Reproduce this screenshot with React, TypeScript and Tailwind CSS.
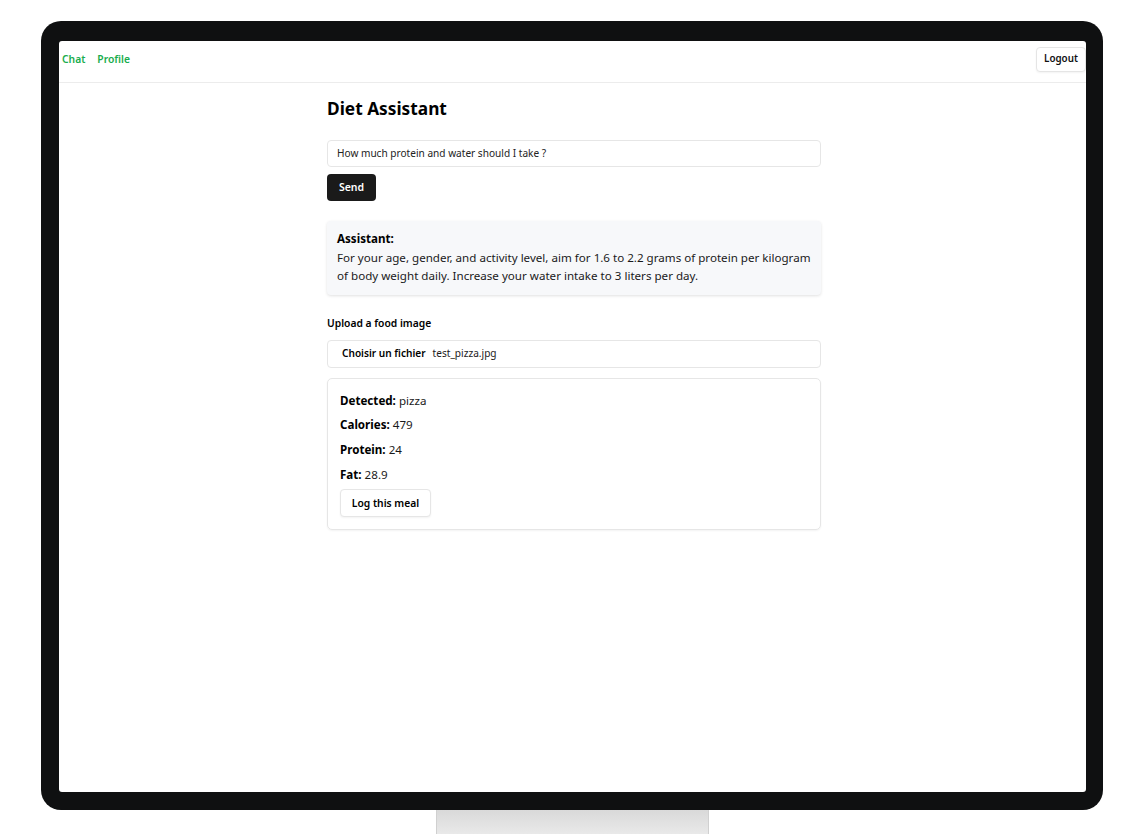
import React from "react";

export default function App() {
  const font = { fontFamily: '"Noto Sans", "Open Sans", sans-serif' };
  return (
    <div className="w-[1131px] h-[834px] bg-white overflow-hidden flex flex-col items-center pt-[21px]" style={font}>
      <div className="w-[1062px] h-[789px] bg-[#0f1011] rounded-[20px] pl-[18px] pr-[17px] pt-[20px] pb-[18px] ml-[13px]">
        <div className="w-full h-full bg-white rounded-[3px] flex flex-col overflow-hidden">
          <header className="h-[42px] border-b border-[#ececec] flex items-start justify-between pl-[3px] pr-0 pt-[6px] shrink-0">
            <nav className="h-[25px] flex items-center gap-[12px] text-[10.3px] font-semibold text-[#18ad4d]">
              <span>Chat</span>
              <span>Profile</span>
            </nav>
            <button className="h-[25px] w-[50px] border border-[#e5e5e5] rounded-[4px] text-[9.8px] font-semibold text-[#111] bg-white shadow-[0_1px_2px_rgba(0,0,0,0.05)]">
              Logout
            </button>
          </header>
          <main className="ml-[268px] w-[494px] pt-[15px] flex flex-col">
            <h1 className="text-[17.3px] font-bold text-black leading-[22px]">Diet Assistant</h1>
            <div className="mt-[20px] h-[27px] border border-[#e6e6e6] rounded-[4px] flex items-center px-[9px] text-[10.1px] text-[#222]">
              How much protein and water should I take ?
            </div>
            <button className="mt-[7px] w-[49px] h-[27px] bg-[#1a1a1a] text-white rounded-[4px] text-[10.5px] font-semibold">
              Send
            </button>
            <div className="mt-[20px] bg-[#f7f8fa] rounded-[4px] shadow-[0_1px_3px_rgba(0,0,0,0.12)] px-[10px] pt-[9px] pb-[9px] text-[11.6px] leading-[18.5px] text-[#1a1a1a]">
              <div className="font-bold text-black">Assistant:</div>
              <div>
                For your age, gender, and activity level, aim for 1.6 to 2.2 grams of protein per kilogram of body weight daily. Increase your water intake to 3 liters per day.
              </div>
            </div>
            <div className="mt-[21px] text-[10.3px] font-semibold text-black leading-[14px]">Upload a food image</div>
            <div className="mt-[10px] h-[28px] border border-[#e6e6e6] rounded-[4px] flex items-center pl-[14px] text-[10.1px] text-[#1a1a1a]">
              <span className="font-semibold text-black">Choisir un fichier</span>
              <span className="ml-[7px]">test_pizza.jpg</span>
            </div>
            <div className="mt-[10px] border border-[#e6e6e6] rounded-[5px] shadow-[0_1px_2px_rgba(0,0,0,0.05)] px-[12px] pt-[13px] pb-[12px] text-[11.6px] text-[#1a1a1a] leading-[18px] flex flex-col">
              <div><span className="font-bold text-black">Detected:</span> pizza</div>
              <div className="mt-[6.7px]"><span className="font-bold text-black">Calories:</span> 479</div>
              <div className="mt-[6.7px]"><span className="font-bold text-black">Protein:</span> 24</div>
              <div className="mt-[6.7px]"><span className="font-bold text-black">Fat:</span> 28.9</div>
              <button className="mt-[5px] self-start w-[91px] h-[28px] border border-[#e6e6e6] rounded-[4px] text-[10.3px] font-semibold text-black bg-white shadow-[0_1px_2px_rgba(0,0,0,0.05)]">
                Log this meal
              </button>
            </div>
          </main>
        </div>
      </div>
      <div className="w-[273px] h-[24px] ml-[14px] bg-gradient-to-b from-[#d9d9d9] to-[#e9e9e9] border-x border-[#d0d0d0]" />
    </div>
  );
}
